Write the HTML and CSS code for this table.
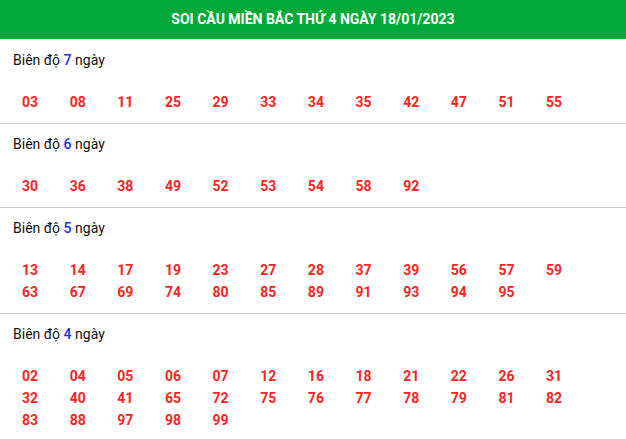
FILE: index.html
```html
<!DOCTYPE html>
<html lang="vi">
<head>
    <meta charset="UTF-8">
    <meta name="viewport" content="width=device-width, initial-scale=1.0">
    <title>Soi cầu miền Bắc</title>
    <link rel="stylesheet" href="styles.css">
</head>
<body>

    <!-- Tieu de -->
    <div class="box-title">SOI CẦU MIỀN BẮC THỨ 4 NGÀY 18/01/2023</div>

    <!-- Bien do 7 ngay -->
    <div class="range-box">
        <div class="range-label">Biên độ <b>7</b> ngày</div>
        <div class="num-list">
            <span>03</span><span>08</span><span>11</span><span>25</span><span>29</span><span>33</span>
            <span>34</span><span>35</span><span>42</span><span>47</span><span>51</span><span>55</span>
        </div>
    </div>

    <!-- Bien do 6 ngay -->
    <div class="range-box">
        <div class="range-label">Biên độ <b>6</b> ngày</div>
        <div class="num-list">
            <span>30</span><span>36</span><span>38</span><span>49</span><span>52</span><span>53</span>
            <span>54</span><span>58</span><span>92</span>
        </div>
    </div>

    <!-- Bien do 5 ngay -->
    <div class="range-box">
        <div class="range-label">Biên độ <b>5</b> ngày</div>
        <div class="num-list">
            <span>13</span><span>14</span><span>17</span><span>19</span><span>23</span><span>27</span>
            <span>28</span><span>37</span><span>39</span><span>56</span><span>57</span><span>59</span>
            <span>63</span><span>67</span><span>69</span><span>74</span><span>80</span><span>85</span>
            <span>89</span><span>91</span><span>93</span><span>94</span><span>95</span>
        </div>
    </div>

    <!-- Bien do 4 ngay -->
    <div class="range-box">
        <div class="range-label">Biên độ <b>4</b> ngày</div>
        <div class="num-list">
            <span>02</span><span>04</span><span>05</span><span>06</span><span>07</span><span>12</span>
            <span>16</span><span>18</span><span>21</span><span>22</span><span>26</span><span>31</span>
            <span>32</span><span>40</span><span>41</span><span>65</span><span>72</span><span>75</span>
            <span>76</span><span>77</span><span>78</span><span>79</span><span>81</span><span>82</span>
            <span>83</span><span>88</span><span>97</span><span>98</span><span>99</span>
        </div>
    </div>

</body>
</html>
```

FILE: styles.css
```css
/* Reset */
* {
    margin: 0;
    padding: 0;
    box-sizing: border-box;
}

body {
    font-family: Roboto, 'Liberation Sans', sans-serif;
    font-size: 14px;
    color: #111;
    background-color: #fff;
}

/* Title bar */
.box-title {
    height: 39px;
    line-height: 39px;
    background-color: #02a93a;
    color: #fff;
    font-weight: 700;
    font-size: 14px;
    text-align: center;
}

/* Each range block */
.range-box {
    padding: 11px 13px 10px;
    border-bottom: 1px solid #c8c8c8;
}

.range-box + .range-box {
    padding-top: 10px;
}

.range-box:last-child {
    border-bottom: none;
}

.range-label {
    line-height: 20px;
}

.range-label b {
    color: #1a2fe0;
    font-weight: 500;
}

/* Numbers */
.num-list {
    display: grid;
    grid-template-columns: repeat(12, 47.65px);
    margin-top: 21px;
    padding-left: 9px;
}

.num-list span {
    line-height: 22px;
    font-weight: 700;
    color: #fb2424;
}
```
